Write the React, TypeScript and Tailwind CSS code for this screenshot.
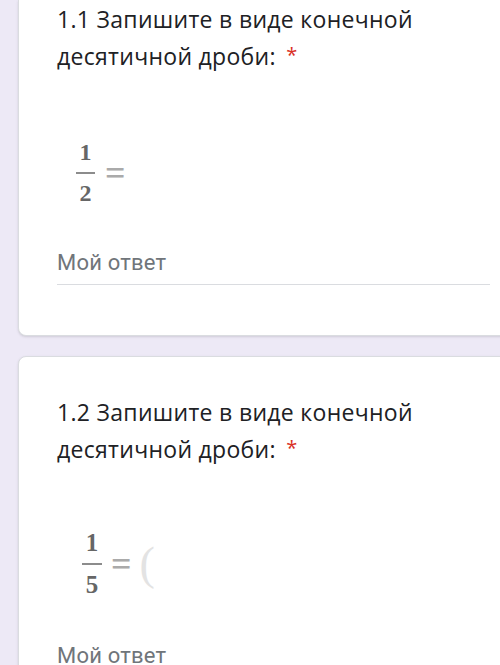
import React from "react";

const sans = { fontFamily: "'Open Sans', Roboto, sans-serif" };
const roboto = { fontFamily: "Roboto, 'Open Sans', sans-serif" };
const serif = { fontFamily: "'Liberation Serif', 'DejaVu Serif', serif" };

function Fraction({
	top,
	bottom,
	size,
	barWidth,
}: {
	top: string;
	bottom: string;
	size: string;
	barWidth: string;
}) {
	return (
		<div className={`flex flex-col items-center font-bold text-[#666] ${size}`} style={serif}>
			<span className="leading-none">{top}</span>
			<div className={`mt-[8px] mb-[7px] h-[2px] bg-[#8c8c8c] ${barWidth}`} />
			<span className="leading-none">{bottom}</span>
		</div>
	);
}

function Question({
	num,
	className,
	fractionTop,
	fraction,
	answerTop,
}: {
	num: string;
	className: string;
	fractionTop: string;
	fraction: React.ReactNode;
	answerTop: string;
}) {
	return (
		<div
			className={`ml-[18px] w-[500px] shrink-0 border border-[#dadce0] bg-white pl-[38px] pr-[27px] shadow-sm ${className}`}
		>
			<div className="text-[23px] leading-[37px] tracking-[0.3px] text-[#202124]" style={sans}>
				{num} Запишите в виде конечной
				<br />
				десятичной дроби:{" "}
				<span className="relative -top-[3px] ml-[4px] text-[20px] text-[#d93025]">*</span>
			</div>
			<div className={fractionTop}>{fraction}</div>
			<div
				className={`${answerTop} border-b border-[#dadce0] pb-[9px] text-[22px] leading-[24px] tracking-[0.2px] text-[#70757a]`}
				style={roboto}
			>
				Мой ответ
			</div>
		</div>
	);
}

export default function App() {
	return (
		<div className="flex h-[665px] w-[500px] flex-col gap-[20px] overflow-hidden bg-[#ede9f6]">
			<Question
				num="1.1"
				className="rounded-b-lg border-t-0 pt-[1px] pb-[50px]"
				fractionTop="mt-[64px] ml-[19px]"
				answerTop="mt-[46px]"
				fraction={
					<div className="flex items-center">
						<Fraction top="1" bottom="2" size="text-[24px]" barWidth="w-[19px]" />
						<span className="ml-[10px] text-[36px] font-bold leading-none text-[#aaa]" style={serif}>
							=
						</span>
					</div>
				}
			/>
			<Question
				num="1.2"
				className="rounded-t-lg pt-[37px] pb-[40px]"
				fractionTop="mt-[61px] ml-[25px]"
				answerTop="mt-[47px]"
				fraction={
					<div className="flex items-center">
						<Fraction top="1" bottom="5" size="text-[25px]" barWidth="w-[20px]" />
						<span className="ml-[9px] text-[36px] font-bold leading-none text-[#aaa]" style={serif}>
							=
						</span>
						<span className="ml-[8px] text-[46px] leading-none text-[#e3e3e3]" style={serif}>
							(
						</span>
					</div>
				}
			/>
		</div>
	);
}
